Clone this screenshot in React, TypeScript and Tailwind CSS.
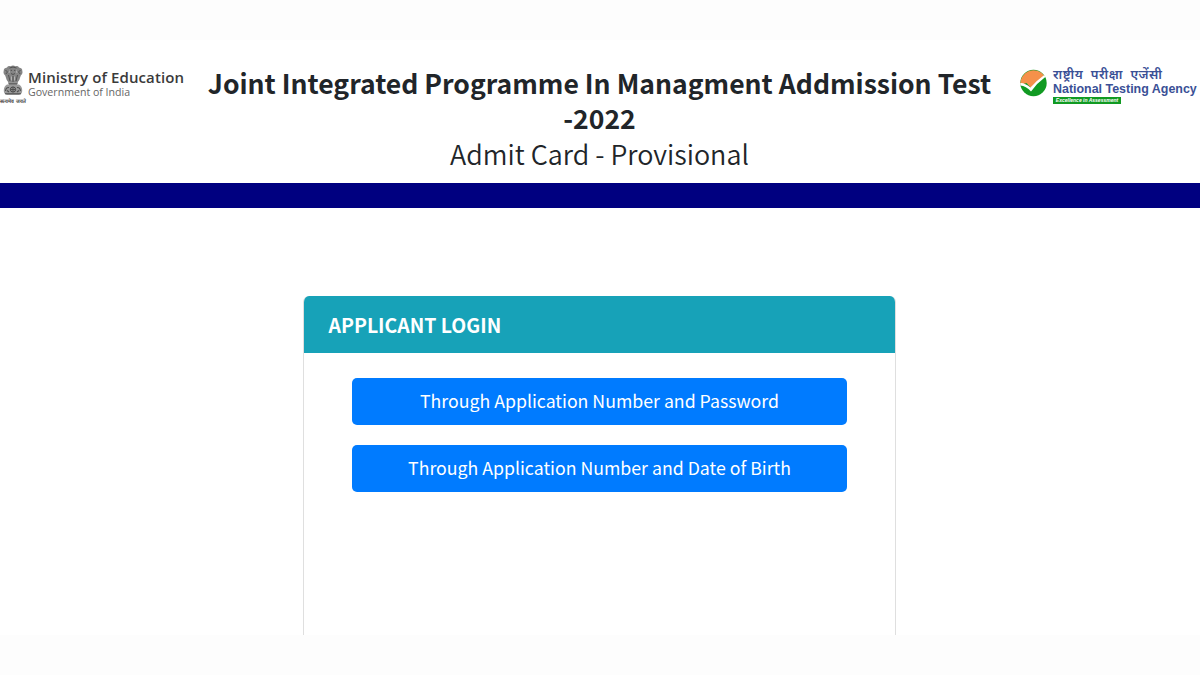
const StateEmblem = () => (
  <svg viewBox="0 0 22 32" className="h-8 w-[22px]" fill="none">
    {/* lions */}
    <path d="M5 2.5Q6 .6 8.500 1.200Q11 -.4 13.500 1.200Q16 .6 17 2.500Q20.500 3 20.300 6Q21.200 8.500 18.800 10.500L17.300 15L15.500 17.500H6.500L4.700 15L3.200 10.500Q.8 8.500 1.700 6Q1.500 3 5 2.500Z" fill="#858585" />
    <path d="M7.500 3Q11 1 14.500 3M7 6Q8.500 4.500 10 5.500M12 5.500Q13.500 4.500 15 6M9 8.500Q11 10.500 13 8.500M3.500 5L5.500 7L3.800 9M18.500 5L16.500 7L18.200 9M6.500 10L8 16M15.500 10L14 16M11 11V17" stroke="#505050" strokeWidth="1" />
    <path d="M8 4.500L7 8M14 4.500L15 8M9.500 11.500V15.500M12.500 11.500V15.500" stroke="#c9c9c9" strokeWidth=".7" />
    {/* abacus and lotus base */}
    <path d="M6 17.500H16L15 20H7Z" fill="#666" />
    <path d="M5 19.500Q2 21 1.800 25Q1.500 29 5 30H17Q20.500 29 20.200 25Q20 21 17 19.500Z" fill="#9a9a9a" />
    <circle cx="11" cy="24.500" r="2.600" stroke="#444" strokeWidth="1" />
    <path d="M11 22V27M8.500 24.500H13.500M3.500 26Q4 22 7 22.500M18.500 26Q18 22 15 22.500M3 28.700H19M5 25.500L7 27M17 25.500L15 27" stroke="#505050" strokeWidth="1.100" />
  </svg>
);

const MinistryLogo = () => (
  <div className="flex w-[200px] shrink-0 pt-[25px]">
    <div className="flex w-[26px] shrink-0 flex-col items-center">
      <StateEmblem />
      <span className="mt-px text-[5px] leading-[6px] font-bold whitespace-nowrap text-[#444]">
        सत्यमेव जयते
      </span>
    </div>
    <div className="font-['Open_Sans','Noto_Sans',sans-serif] whitespace-nowrap">
      <div className="mt-[3px] ml-[2px] text-[15px] leading-[18px] font-semibold tracking-[0.1px] text-[#3a3a3a]">
        Ministry of Education
      </div>
      <div className="mt-px ml-[2px] text-[10.600px] leading-[11px] text-[#666]">
        Government of India
      </div>
    </div>
  </div>
);

const AgencyLogo = () => (
  <div className="flex w-[181px] shrink-0 gap-[7px] pt-[26px]">
    <svg viewBox="0 0 27 28" className="ml-px mt-[3px] h-7 w-[27px] shrink-0">
      <circle cx="13.500" cy="14" r="13.200" fill="#119a22" />
      <path d="M.5 16A13.200 13.200 0 0 1 24.500 7L11 19L6.500 14Z" fill="#f5914a" />
      <path d="M.3 14Q4.500 13.500 10.500 18.500Q16 12 24.300 6L25.300 8Q17 14 11 22.500Q6 17 .4 16.500Z" fill="#fff" />
    </svg>
    <div className="-ml-px whitespace-nowrap text-[#3a5096]">
      <div className="font-['Noto_Sans','Noto_Sans_Devanagari',sans-serif] text-[13px] leading-[16px] font-semibold tracking-[0.45px]">
        राष्ट्रीय&nbsp; परीक्षा&nbsp; एजेंसी
      </div>
      <div className="font-['Liberation_Sans',sans-serif] text-[12.450px] leading-[14px] font-bold">
        National Testing Agency
      </div>
      <div className="mt-px flex h-[7px] w-[68px] items-center justify-center bg-[#119a22] font-['Liberation_Sans',sans-serif] text-[5px] leading-none font-bold text-white italic">
        Excellence in Assessment
      </div>
    </div>
  </div>
);

const loginOptions = [
  "Through Application Number and Password",
  "Through Application Number and Date of Birth",
];

const App = () => {
  return (
    <div className="h-[675px] overflow-hidden bg-[#fdfdfd] py-10 font-['Noto_Sans_CJK_SC',sans-serif] text-[#212529]">
      <div className="flex h-[595px] flex-col overflow-hidden bg-white">
        <header className="flex h-[143px] shrink-0">
          <MinistryLogo />
          <div className="w-[819px] shrink-0 pt-[25px] pr-[20px] text-center whitespace-nowrap">
            <h1 className="text-[26.550px] leading-[35px] font-bold">
              Joint Integrated Programme In Managment Addmission Test
              <br />
              -2022
            </h1>
            <h2 className="mt-px text-[26.900px] leading-[35px] font-[350]">
              Admit Card - Provisional
            </h2>
          </div>
          <AgencyLogo />
        </header>
        <div className="h-[25px] shrink-0 bg-[#000080]" />

        <main className="flex grow justify-center pt-[88px] pr-[2px]">
          <div className="w-[593px] overflow-hidden rounded-t-md border-x border-[#dfdfdf]">
            <div className="flex h-[57px] items-center bg-[#17a2b8] px-[25px] text-[19.450px] font-bold text-white">
              APPLICANT LOGIN
            </div>
            <div className="flex flex-col gap-5 px-12 pt-[25px]">
              {loginOptions.map((option) => (
                <button
                  key={option}
                  className="h-[47px] rounded-[5px] bg-[#007bff] pb-[2px] pl-px text-[17.720px] whitespace-nowrap text-white"
                >
                  {option}
                </button>
              ))}
            </div>
          </div>
        </main>
      </div>
    </div>
  );
};

export default App;
